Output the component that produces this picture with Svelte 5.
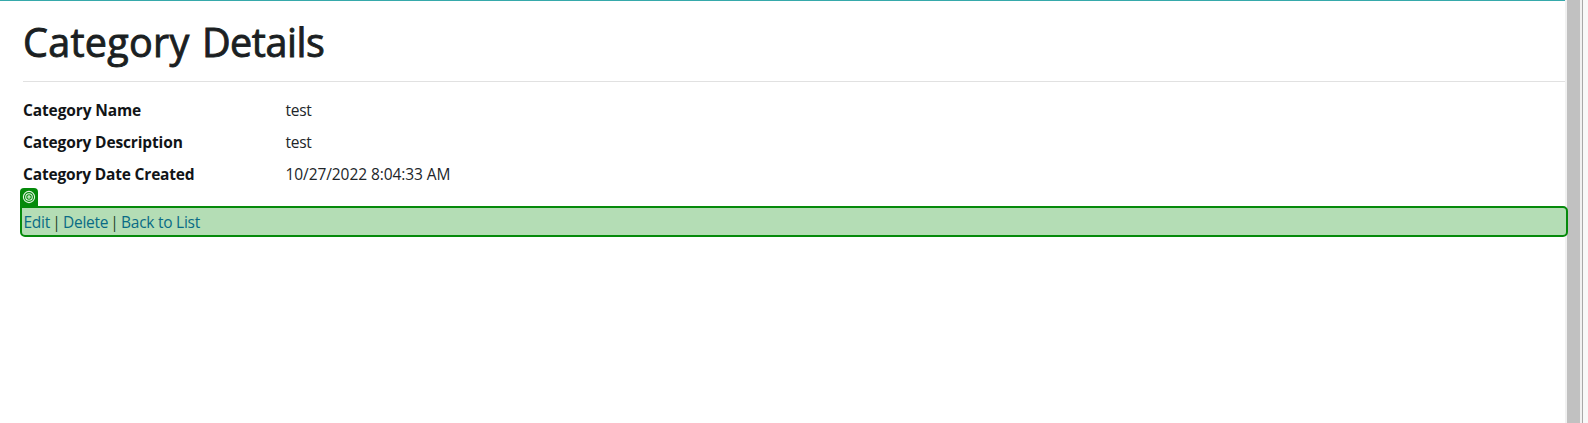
<script>
  const details = [
    { term: 'Category Name', value: 'test', tw: '-0.12px', vw: '-0.3px' },
    { term: 'Category Description', value: 'test', tw: '-0.14px', vw: '-0.3px' },
    { term: 'Category Date Created', value: '10/27/2022 8:04:33 AM', tw: '-0.18px', vw: '-0.08px' },
  ];
</script>

<div class="page">
  <main>
    <h1><span class="first">Category</span> <span class="second">Details</span></h1>
    <dl>
      {#each details as row}
        <div class="row">
          <dt><span style:letter-spacing={row.tw}>{row.term}</span></dt>
          <dd><span style:letter-spacing={row.vw}>{row.value}</span></dd>
        </div>
      {/each}
    </dl>
    <div class="actions">
      <svg class="badge" viewBox="0 0 18 18" width="18" height="18">
        <path d="M0 18V4Q0 0 4 0H14Q18 0 18 4V18Z" fill="#058a0b" />
        <g fill="none" stroke="#e2f5e2" stroke-width="1.1">
          <circle cx="9" cy="9" r="5.6" />
          <circle cx="9" cy="9" r="3.3" />
          <circle cx="9" cy="9" r="1.1" />
        </g>
      </svg>
      <a class="edit" href="#edit">Edit</a><i>|</i><a class="delete" href="#delete">Delete</a><i>|</i><a class="back" href="#list">Back to List</a>
    </div>
  </main>
  <div class="track"><div class="thumb"></div></div>
  <div class="edge"></div>
</div>

<style>
  :global(body) { margin: 0; overflow: hidden; background: #fff; }
  * { box-sizing: border-box; }
  .page {
    display: flex;
    height: 423px;
    font: 15.5px/24px "Open Sans", "Noto Sans", sans-serif;
    color: #212529;
  }
  main { width: 1565px; flex: none; border-top: 1px solid #36a9ab; }
  h1 {
    margin: 0 0 0 23px;
    height: 81px;
    padding-top: 17px;
    border-bottom: 1px solid #e1e1e1;
    font-size: 39.5px;
    font-weight: 400;
    line-height: 48px;
    white-space: nowrap;
    word-spacing: 2px;
    color: #1b1f22;
    -webkit-text-stroke: 0.9px #1b1f22;
  }
  .first { letter-spacing: 0.3px; }
  .second { letter-spacing: -0.45px; }
  dl { margin: 0 0 0 23px; height: 124px; padding-top: 16px; }
  .row { display: flex; height: 32px; }
  dt { width: 262.5px; font-weight: 700; color: #111417; white-space: nowrap; }
  dd { margin: 0; white-space: nowrap; }
  .actions {
    position: relative;
    z-index: 1;
    display: flex;
    align-items: center;
    width: 1548px;
    height: 31px;
    margin-left: 20px;
    padding: 1px 0 0 1.5px;
    border: 2px solid #058a0b;
    border-radius: 0 5px 5px 5px;
    background: #b4ddb5;
    letter-spacing: -0.25px;
  }
  .badge { position: absolute; left: -2px; top: -20px; }
  a { color: #096b85; text-decoration: none; white-space: nowrap; }
  i { font-style: normal; color: #24432a; width: 13px; text-align: center; }
  .edit { width: 26.5px; }
  .delete { width: 45px; }
  .track {
    width: 17px;
    flex: none;
    padding-left: 2px;
    background: #f1f1f1;
  }
  .thumb { width: 13px; height: 100%; background: #c1c1c1; }
  .edge { flex: 1; border-left: 1px solid #a8a8a8; background: #f8f8f8; }
</style>
